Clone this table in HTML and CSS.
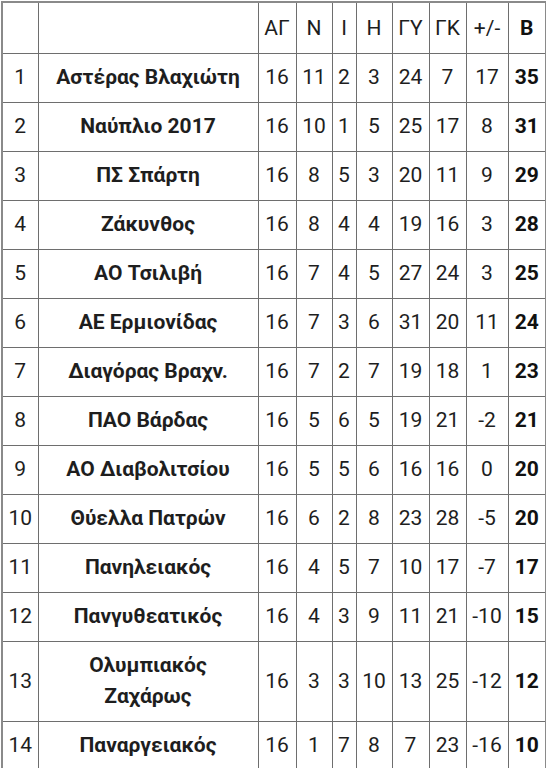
FILE: index.html
```html
<!DOCTYPE html>
<html lang="el">
<head>
<meta charset="utf-8">
<title>Βαθμολογία</title>
<link rel="stylesheet" href="styles.css">
</head>
<body>
<table class="standings">
  <colgroup>
    <col class="c-pos"><col class="c-team"><col class="c-ag"><col class="c-n"><col class="c-i"><col class="c-h"><col class="c-gy"><col class="c-gk"><col class="c-diff"><col class="c-b">
  </colgroup>
  <thead>
    <tr><th></th><th></th><th>ΑΓ</th><th>Ν</th><th>Ι</th><th>Η</th><th>ΓΥ</th><th>ΓΚ</th><th>+/-</th><th class="pts">Β</th></tr>
  </thead>
  <tbody>
    <tr><td>1</td><td class="team">Αστέρας Βλαχιώτη</td><td>16</td><td>11</td><td>2</td><td>3</td><td>24</td><td>7</td><td>17</td><td class="pts">35</td></tr>
    <tr><td>2</td><td class="team">Ναύπλιο 2017</td><td>16</td><td>10</td><td>1</td><td>5</td><td>25</td><td>17</td><td>8</td><td class="pts">31</td></tr>
    <tr><td>3</td><td class="team">ΠΣ Σπάρτη</td><td>16</td><td>8</td><td>5</td><td>3</td><td>20</td><td>11</td><td>9</td><td class="pts">29</td></tr>
    <tr><td>4</td><td class="team">Ζάκυνθος</td><td>16</td><td>8</td><td>4</td><td>4</td><td>19</td><td>16</td><td>3</td><td class="pts">28</td></tr>
    <tr><td>5</td><td class="team">ΑΟ Τσιλιβή</td><td>16</td><td>7</td><td>4</td><td>5</td><td>27</td><td>24</td><td>3</td><td class="pts">25</td></tr>
    <tr><td>6</td><td class="team">ΑΕ Ερμιονίδας</td><td>16</td><td>7</td><td>3</td><td>6</td><td>31</td><td>20</td><td>11</td><td class="pts">24</td></tr>
    <tr><td>7</td><td class="team">Διαγόρας Βραχν.</td><td>16</td><td>7</td><td>2</td><td>7</td><td>19</td><td>18</td><td>1</td><td class="pts">23</td></tr>
    <tr><td>8</td><td class="team">ΠΑΟ Βάρδας</td><td>16</td><td>5</td><td>6</td><td>5</td><td>19</td><td>21</td><td>-2</td><td class="pts">21</td></tr>
    <tr><td>9</td><td class="team">ΑΟ Διαβολιτσίου</td><td>16</td><td>5</td><td>5</td><td>6</td><td>16</td><td>16</td><td>0</td><td class="pts">20</td></tr>
    <tr><td>10</td><td class="team">Θύελλα Πατρών</td><td>16</td><td>6</td><td>2</td><td>8</td><td>23</td><td>28</td><td>-5</td><td class="pts">20</td></tr>
    <tr><td>11</td><td class="team">Πανηλειακός</td><td>16</td><td>4</td><td>5</td><td>7</td><td>10</td><td>17</td><td>-7</td><td class="pts">17</td></tr>
    <tr><td>12</td><td class="team">Πανγυθεατικός</td><td>16</td><td>4</td><td>3</td><td>9</td><td>11</td><td>21</td><td>-10</td><td class="pts">15</td></tr>
    <tr><td>13</td><td class="team">Ολυμπιακός Ζαχάρως</td><td>16</td><td>3</td><td>3</td><td>10</td><td>13</td><td>25</td><td>-12</td><td class="pts">12</td></tr>
    <tr><td>14</td><td class="team">Παναργειακός</td><td>16</td><td>1</td><td>7</td><td>8</td><td>7</td><td>23</td><td>-16</td><td class="pts">10</td></tr>
  </tbody>
</table>
</body>
</html>
```

FILE: styles.css
```css
html, body {
  margin: 0;
  padding: 0;
  background: #ffffff;
}

body {
  padding: 1px 0 0 1px;
  font-family: Roboto, "Noto Sans", "DejaVu Sans", sans-serif;
  color: #1e1e1e;
}

.standings {
  border-collapse: collapse;
  table-layout: fixed;
  width: 544px;
  border: 2px solid #8a8a8a;
  font-size: 21px;
  line-height: 31px;
}

.c-pos  { width: 36px; }
.c-team { width: 220px; }
.c-ag   { width: 38px; }
.c-n    { width: 36px; }
.c-i    { width: 24px; }
.c-h    { width: 36px; }
.c-gy   { width: 37px; }
.c-gk   { width: 37px; }
.c-diff { width: 42px; }
.c-b    { width: 38px; }

.standings th,
.standings td {
  border: 1px solid #6e6e6e;
  padding: 8px 0 9px;
  text-align: center;
  vertical-align: middle;
  white-space: nowrap;
  overflow: visible;
}

.standings th {
  font-weight: 400;
  height: 32px;
  padding: 9px 0 9px;
}

.standings td.team {
  font-weight: 700;
  white-space: normal;
  padding-left: 10px;
  padding-right: 10px;
}

.standings .pts {
  font-weight: 700;
  color: #111111;
}
```
